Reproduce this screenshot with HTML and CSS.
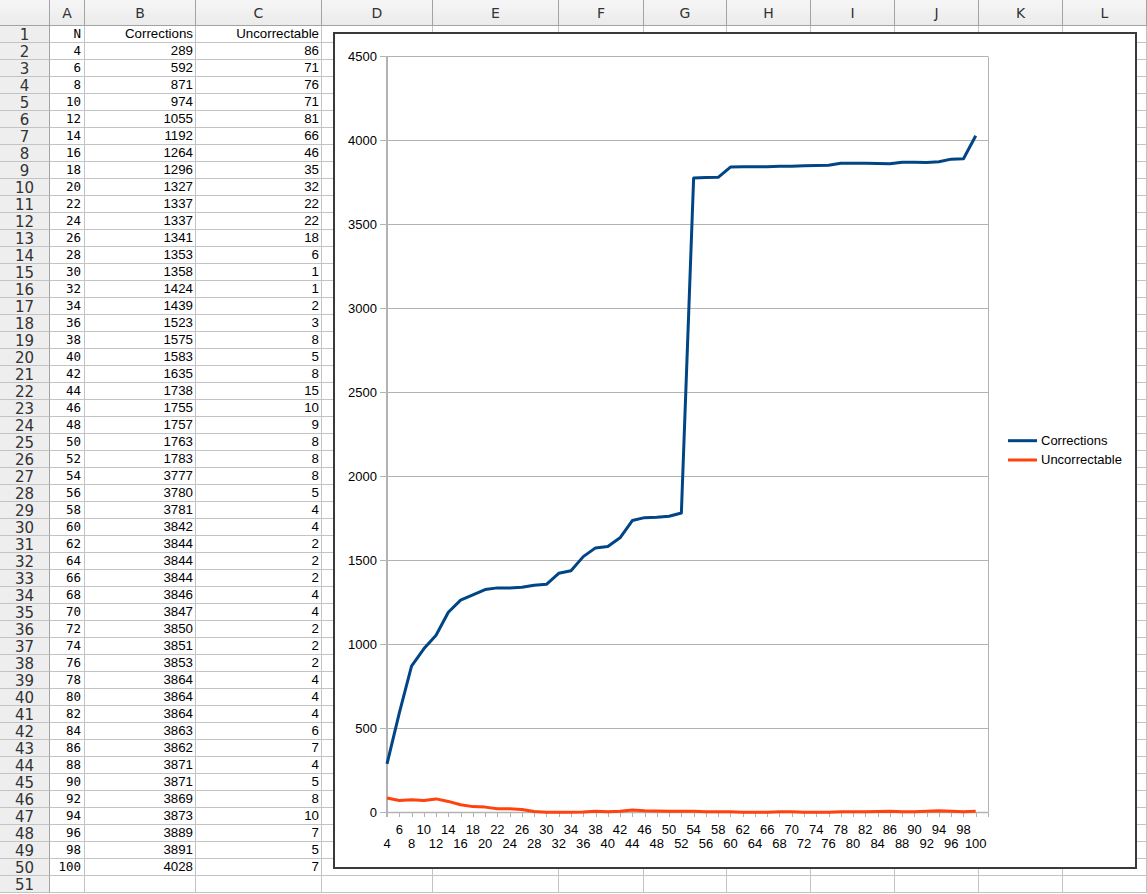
FILE: index.html
```html
<!DOCTYPE html>
<html lang="en">
<head>
<meta charset="utf-8">
<title>Sheet</title>
<link rel="stylesheet" href="styles.css">
</head>
<body>
<div class="sheet" id="sheet"></div>
<div class="chart" id="chart"></div>
<script src="script.js"></script>
</body>
</html>
```

FILE: styles.css
```css
html, body {
  margin: 0;
  padding: 0;
  background: #ffffff;
  overflow: hidden;
}
.sheet {
  display: grid;
  grid-template-columns: 50px 35px 111px 126px 111px 126px 85px 83px 84px 84px 84px 84px 84px;
  grid-template-rows: 26px repeat(51, 17px);
  width: 1147px;
}
.corner, .colhead {
  box-sizing: border-box;
  background: linear-gradient(#f6f6f6, #ebebeb);
  border-right: 1px solid #a3a3a3;
  border-bottom: 1px solid #a3a3a3;
}
.colhead {
  font-family: "DejaVu Sans", sans-serif;
  font-size: 14px;
  color: #333333;
  display: flex;
  align-items: center;
  justify-content: center;
  padding-top: 1px;
}
.rowhead {
  box-sizing: border-box;
  background: #eeeeee;
  border-right: 1px solid #a3a3a3;
  border-bottom: 1px solid #c3c3c3;
  font-family: "DejaVu Sans", sans-serif;
  font-size: 15px;
  color: #333333;
  display: flex;
  align-items: center;
  justify-content: center;
  line-height: 16px;
  padding-top: 2px;
}
.cell {
  box-sizing: border-box;
  border-right: 1px solid #c3c3c3;
  border-bottom: 1px solid #c3c3c3;
  font-family: "Liberation Sans", Arial, sans-serif;
  font-size: 13.3px;
  color: #000000;
  text-align: right;
  padding-right: 2px;
  line-height: 16px;
  white-space: nowrap;
  overflow: hidden;
}
.cell.mono {
  font-family: "DejaVu Sans Mono", "Liberation Mono", monospace;
  font-size: 12.5px;
  line-height: 15px;
  padding-right: 3px;
}
.chart {
  position: absolute;
  left: 333px;
  top: 32px;
  width: 804px;
  height: 837px;
  box-sizing: border-box;
  border: 2px solid #3a3a3a;
  background: #ffffff;
}
.chart svg {
  position: absolute;
  left: 0;
  top: 0;
  font-family: "Liberation Sans", Arial, sans-serif;
  font-size: 13px;
}
```

FILE: script.js
```js
(function () {
  var N = [], i;
  for (i = 4; i <= 100; i += 2) N.push(i);
  var B = [289,592,871,974,1055,1192,1264,1296,1327,1337,1337,1341,1353,1358,1424,1439,1523,1575,1583,1635,1738,1755,1757,1763,1783,3777,3780,3781,3842,3844,3844,3844,3846,3847,3850,3851,3853,3864,3864,3864,3863,3862,3871,3871,3869,3873,3889,3891,4028];
  var C = [86,71,76,71,81,66,46,35,32,22,22,18,6,1,1,2,3,8,5,8,15,10,9,8,8,8,5,4,4,2,2,2,4,4,2,2,2,4,4,4,6,7,4,5,8,10,7,5,7];
  var cols = ['A','B','C','D','E','F','G','H','I','J','K','L'];

  var sheet = document.getElementById('sheet');
  var html = '<div class="corner"></div>';
  cols.forEach(function (c) { html += '<div class="colhead">' + c + '</div>'; });
  for (var r = 1; r <= 51; r++) {
    html += '<div class="rowhead">' + r + '</div>';
    for (var c = 0; c < 12; c++) {
      var txt = '', cls = 'cell';
      if (c === 0) cls += ' mono';
      if (r === 1) {
        if (c === 0) txt = 'N';
        if (c === 1) txt = 'Corrections';
        if (c === 2) txt = 'Uncorrectable';
      } else if (r <= 50) {
        if (c === 0) txt = N[r - 2];
        if (c === 1) txt = B[r - 2];
        if (c === 2) txt = C[r - 2];
      }
      html += '<div class="' + cls + '">' + txt + '</div>';
    }
  }
  sheet.innerHTML = html;

  var OX = 335, OY = 34;
  var left = 387, right = 988, top = 56.5, bottom = 812.5;
  var step = (right - left) / 49;
  var scale = (bottom - top) / 4500;
  function X(p) { return (p - OX).toFixed(2); }
  function Y(p) { return (p - OY).toFixed(2); }
  function px(i) { return left + i * step; }
  function py(v) { return bottom - v * scale; }

  var s = '<svg width="800" height="833" viewBox="0 0 800 833" xmlns="http://www.w3.org/2000/svg">';
  for (var k = 0; k <= 9; k++) {
    var gy = bottom - k * 84;
    s += '<line x1="' + X(left) + '" y1="' + Y(gy) + '" x2="' + X(right) + '" y2="' + Y(gy) + '" stroke="#b3b3b3" stroke-width="1"/>';
    s += '<line x1="' + X(380) + '" y1="' + Y(gy) + '" x2="' + X(left) + '" y2="' + Y(gy) + '" stroke="#b3b3b3" stroke-width="1"/>';
    s += '<text x="' + X(377) + '" y="' + Y(gy + 4.8) + '" text-anchor="end" fill="#000">' + (k * 500) + '</text>';
  }
  s += '<line x1="' + X(988.5) + '" y1="' + Y(top) + '" x2="' + X(988.5) + '" y2="' + Y(bottom) + '" stroke="#b3b3b3" stroke-width="1"/>';
  s += '<line x1="' + X(387) + '" y1="' + Y(top) + '" x2="' + X(387) + '" y2="' + Y(bottom + 4.5) + '" stroke="#b3b3b3" stroke-width="2"/>';
  s += '<line x1="' + X(left) + '" y1="' + Y(bottom) + '" x2="' + X(right) + '" y2="' + Y(bottom) + '" stroke="#b3b3b3" stroke-width="1.5"/>';
  for (i = 0; i <= 49; i++) {
    var tx = Math.round(px(i)) + 0.5;
    s += '<line x1="' + X(tx) + '" y1="' + Y(bottom) + '" x2="' + X(tx) + '" y2="' + Y(bottom + 4.5) + '" stroke="#b3b3b3" stroke-width="1"/>';
  }
  for (i = 0; i < 49; i++) {
    var ly = (i % 2 === 0) ? 848.3 : 834.3;
    s += '<text x="' + X(px(i)) + '" y="' + Y(ly) + '" text-anchor="middle" fill="#000">' + N[i] + '</text>';
  }
  function poly(arr, color) {
    var pts = arr.map(function (v, j) { return X(px(j)) + ',' + Y(py(v)); }).join(' ');
    return '<polyline points="' + pts + '" fill="none" stroke="' + color + '" stroke-width="3" stroke-linejoin="round"/>';
  }
  s += poly(C, '#ff420e');
  s += poly(B, '#004586');
  s += '<line x1="' + X(1008) + '" y1="' + Y(440.7) + '" x2="' + X(1037) + '" y2="' + Y(440.7) + '" stroke="#004586" stroke-width="3"/>';
  s += '<text x="' + X(1041) + '" y="' + Y(445) + '" fill="#000">Corrections</text>';
  s += '<line x1="' + X(1008) + '" y1="' + Y(460) + '" x2="' + X(1037) + '" y2="' + Y(460) + '" stroke="#ff420e" stroke-width="3"/>';
  s += '<text x="' + X(1041) + '" y="' + Y(464.3) + '" fill="#000">Uncorrectable</text>';
  s += '</svg>';
  document.getElementById('chart').innerHTML = s;
})();
```
